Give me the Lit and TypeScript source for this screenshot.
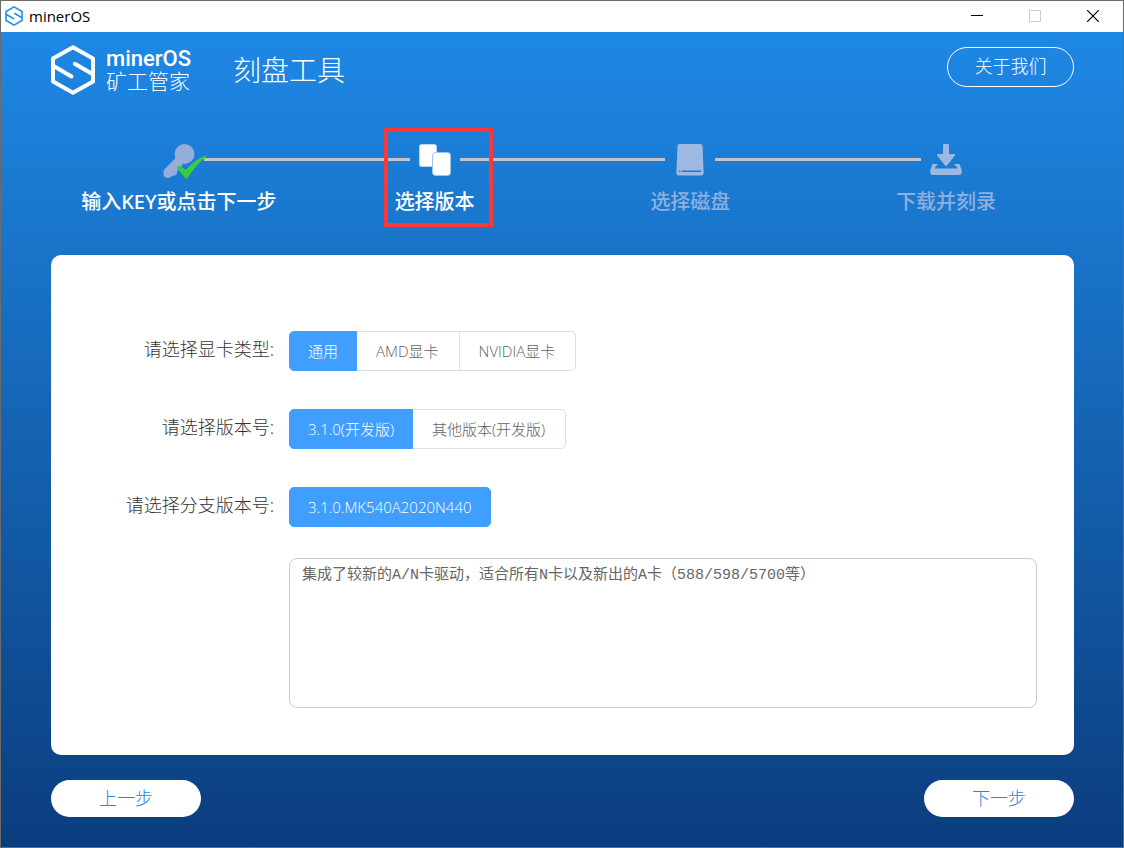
import { LitElement, html, css, svg, nothing } from "lit";
import { customElement, property, state } from "lit/decorators.js";
import { classMap } from "lit/directives/class-map.js";

const hexagonMark = svg`
  <g fill="none" stroke="currentColor" stroke-width="4" stroke-linejoin="round" stroke-linecap="round">
    <path d="M22 2.3 42 13.6v22.8L22 47.7 2 36.4V13.6z" />
    <path d="M3 21.2 20.5 31.4M23.8 18.8 41 28.8" />
  </g>`;

const stepIcons = {
  key: svg`
    <g fill="#96addb">
      <circle cx="30.500" cy="14" r="10" />
      <path d="M22 17.500 9.600 30.200v5l2 2.600h4.600l1.800-2h2.600l2.400-2.300v-2.600l6-6.500z" />
    </g>
    <path fill="#3bcc3b" d="M22.300 27.600 25.600 25.400l6.400 4.600c5-6.200 11.600-11.600 20.400-14.800l.4 1.400C44.600 22.400 38.800 30.400 32.400 39.300z" />`,
  copies: svg`
    <rect x="9.500" y="4.500" width="17" height="22" rx="2" fill="#fff" stroke="#b9d6f2" />
    <rect x="22.500" y="12.500" width="18" height="23" rx="3" fill="#fff" stroke="#9cc4ec" />`,
  disk: svg`
    <path fill="#9db9e2" d="M14.500 4h21c1.200 0 2 .8 2.100 2L38.600 32.500c.1 2-.9 3-2.600 3H14c-1.800 0-2.700-1-2.600-3L12.500 6c.1-1.200.8-2 2-2z" />
    <path fill="#1c76cf" d="M17 30.600h19v1.400H17zM14 30.600h1.500v1.400H14z" />`,
  download: svg`
    <g fill="#9db9e2">
      <path d="M22 5.500c0-1 .6-1.500 1.600-1.500h2.800c1 0 1.600.5 1.600 1.500V14h5.200c1 0 1.200.8.6 1.500l-7.600 9.700c-.8 1-1.600 1-2.400 0l-7.600-9.700c-.6-.7-.4-1.500.6-1.500H22z" />
      <path d="M11.500 24h5v1.500h-1.500l-1.200 3h22.400l-1.200-3h-1.500V24h5l2.200 6v2.500c0 1.500-.8 2.500-2.500 2.500H11.800c-1.700 0-2.500-1-2.500-2.500V30z" />
    </g>`,
};

interface Step {
  label: string;
  icon: keyof typeof stepIcons;
}

const steps: Step[] = [
  { label: "输入KEY或点击下一步", icon: "key" },
  { label: "选择版本", icon: "copies" },
  { label: "选择磁盘", icon: "disk" },
  { label: "下载并刻录", icon: "download" },
];

@customElement("title-bar")
class TitleBar extends LitElement {
  static styles = css`
    :host {
      display: flex;
      align-items: center;
      box-sizing: border-box;
      height: 31px;
      padding: 0 1px 1px 0;
      background: #fff;
      color: #000;
    }
    .icon {
      width: 18px;
      height: 20px;
      margin: 0 6px 0 4px;
      color: #1e90f0;
    }
    .name {
      flex: 1;
      font: 15px/20px "Open Sans", sans-serif;
    }
    .control {
      display: flex;
      align-items: center;
      justify-content: center;
      width: 58px;
      height: 30px;
      padding: 0;
      border: 0;
      background: none;
      color: #000;
    }
    .control:disabled {
      color: #ccc;
    }
  `;

  render() {
    return html`
      <svg class="icon" viewBox="0 0 44 50" aria-hidden="true">${hexagonMark}</svg>
      <span class="name">minerOS</span>
      <button class="control" aria-label="最小化">
        <svg width="12" height="12"><path d="M0 5.500h12" stroke="currentColor" /></svg>
      </button>
      <button class="control" aria-label="最大化" disabled>
        <svg width="12" height="12"><rect x=".5" y=".5" width="11" height="11" fill="none" stroke="currentColor" /></svg>
      </button>
      <button class="control" aria-label="关闭">
        <svg width="12" height="12"><path d="M0 0l12 12M12 0 0 12" stroke="currentColor" stroke-width="1.200" /></svg>
      </button>
    `;
  }
}

@customElement("step-bar")
class StepBar extends LitElement {
  @property({ type: Number }) current = 0;

  static styles = css`
    .steps {
      display: flex;
      margin: 0;
      padding: 0;
      list-style: none;
    }
    .step {
      position: relative;
      flex: 1 1 0;
      min-width: 0;
      color: #8fb0de;
      text-align: center;
    }
    .step.reached {
      color: #fff;
    }
    .track {
      display: flex;
      align-items: center;
      height: 39px;
    }
    .line {
      flex: 1;
      height: 3px;
      background: #c3c3cb;
    }
    .line.hidden {
      visibility: hidden;
    }
    .icon {
      align-self: flex-start;
      width: 50px;
      height: 40px;
      overflow: visible;
      z-index: 1;
    }
    .label {
      margin-top: 8px;
      font-family: "Noto Sans", "Noto Sans CJK SC", sans-serif;
      font-size: 20px;
      line-height: 30px;
      font-weight: 500;
      white-space: nowrap;
    }
    .highlight {
      position: absolute;
      top: -12px;
      left: calc(50% - 51px);
      width: 109px;
      height: 99px;
      box-sizing: border-box;
      border: 4px solid #fb3838;
      z-index: 2;
      pointer-events: none;
    }
  `;

  render() {
    return html`
      <ol class="steps">
        ${steps.map(
          (step, i) => html`
            <li class=${classMap({ step: true, reached: i <= this.current })}>
              <div class="track">
                <span class=${classMap({ line: true, hidden: i === 0 })}></span>
                <svg class="icon" viewBox="0 0 50 40" aria-hidden="true">${stepIcons[step.icon]}</svg>
                <span class=${classMap({ line: true, hidden: i === steps.length - 1 })}></span>
              </div>
              <div class="label">${step.label}</div>
              ${i === this.current ? html`<span class="highlight"></span>` : nothing}
            </li>
          `
        )}
      </ol>
    `;
  }
}

@customElement("option-group")
class OptionGroup extends LitElement {
  @property() name = "";
  @property() label = "";
  @property({ attribute: false }) options: string[] = [];
  @state() selected = 0;

  static styles = css`
    .row {
      display: grid;
      grid-template-columns: 223px 1fr;
      column-gap: 15px;
      margin: 0;
    }
    .caption {
      color: #333;
      font-size: 18px;
      line-height: 36px;
      text-align: right;
    }
    .options {
      display: flex;
    }
    .option {
      position: relative;
      box-sizing: border-box;
      height: 40px;
      padding: 0 20px 0 19px;
      border: 1px solid #dcdfe6;
      border-left-width: 0;
      background: #fff;
      color: #606266;
      font-size: 15px;
      line-height: 39px;
      white-space: nowrap;
    }
    .option:first-child {
      padding: 0 18px;
      border-left-width: 1px;
      border-radius: 5px 0 0 5px;
    }
    .option:last-child {
      border-radius: 0 5px 5px 0;
    }
    .option:only-child {
      border-radius: 5px;
    }
    .option.checked {
      border-color: #409eff;
      background: #409eff;
      color: #fff;
    }
    .radio {
      position: absolute;
      inset: 0;
      width: 100%;
      height: 100%;
      margin: 0;
      opacity: 0;
    }
  `;

  render() {
    return html`
      <div class="row" role="radiogroup" aria-labelledby="caption">
        <span class="caption" id="caption">${this.label}</span>
        <div class="options">
          ${this.options.map(
            (text, i) => html`
              <label class=${classMap({ option: true, checked: i === this.selected })}>
                <input
                  class="radio"
                  type="radio"
                  name=${this.name}
                  .checked=${i === this.selected}
                  @change=${() => (this.selected = i)}
                />${text}
              </label>
            `
          )}
        </div>
      </div>
    `;
  }
}

@customElement("app-root")
class AppRoot extends LitElement {
  static styles = css`
    :host {
      display: flex;
      flex-direction: column;
      box-sizing: border-box;
      min-height: 100vh;
      border: 1px solid #6b6b6b;
      font-family: "Open Sans", "Noto Sans CJK SC", sans-serif;
      font-weight: 300;
    }
    .body {
      flex: 1;
      display: flex;
      flex-direction: column;
      padding: 13px 49px 30px 50px;
      background: linear-gradient(#1e88e5, #0b3d7e);
    }
    .header {
      display: flex;
      align-items: center;
      height: 50px;
      color: #fff;
    }
    .mark {
      width: 44px;
      height: 50px;
      margin-right: 11px;
    }
    .brand {
      display: flex;
      flex-direction: column;
    }
    .brand-latin {
      font: 500 22px/22px Roboto, sans-serif;
    }
    .brand-cjk {
      font-size: 21px;
      line-height: 22px;
    }
    .title {
      flex: 1;
      margin: 0 0 0 42px;
      font-size: 28px;
      line-height: 40px;
      font-weight: 300;
    }
    .about {
      align-self: flex-start;
      width: 127px;
      height: 40px;
      margin-top: 2px;
      padding: 0 0 4px;
      border: 1px solid #fff;
      border-radius: 20px;
      background: none;
      color: #fff;
      font: inherit;
      font-size: 18px;
    }
    .progress {
      margin-top: 45px;
    }
    .card {
      display: flex;
      flex-direction: column;
      gap: 38px;
      flex: 1;
      margin-top: 38px;
      padding: 76px 37px 47px 0;
      border-radius: 10px;
      background: #fff;
    }
    .notes {
      box-sizing: border-box;
      flex: 1;
      min-height: 150px;
      margin: -7px 0 0 238px;
      padding: 6px 12px;
      border: 1px solid #ccc;
      border-radius: 8px;
      background: #fff;
      color: #666;
      font: 400 15px/22px "Liberation Mono", "Noto Sans CJK SC", monospace;
      resize: none;
      outline: none;
    }
    .footer {
      display: flex;
      justify-content: space-between;
      margin-top: 25px;
    }
    .nav {
      width: 150px;
      height: 37px;
      padding: 0 0 4px;
      border: 0;
      border-radius: 19px;
      background: #fff;
      color: #1e88e5;
      font: inherit;
      font-size: 18px;
    }
  `;

  render() {
    return html`
      <title-bar></title-bar>
      <main class="body">
        <header class="header">
          <svg class="mark" viewBox="0 0 44 50" aria-hidden="true">${hexagonMark}</svg>
          <div class="brand">
            <span class="brand-latin">minerOS</span>
            <span class="brand-cjk">矿工管家</span>
          </div>
          <h1 class="title">刻盘工具</h1>
          <button class="about">关于我们</button>
        </header>
        <step-bar class="progress" .current=${1}></step-bar>
        <section class="card">
          <option-group name="gpu" label="请选择显卡类型:" .options=${["通用", "AMD显卡", "NVIDIA显卡"]}></option-group>
          <option-group name="version" label="请选择版本号:" .options=${["3.1.0(开发版)", "其他版本(开发版)"]}></option-group>
          <option-group name="branch" label="请选择分支版本号:" .options=${["3.1.0.MK540A2020N440"]}></option-group>
          <textarea
            class="notes"
            aria-label="版本说明"
            readonly
            spellcheck="false"
            .value=${"集成了较新的A/N卡驱动，适合所有N卡以及新出的A卡（588/598/5700等）"}
          ></textarea>
        </section>
        <footer class="footer">
          <button class="nav">上一步</button>
          <button class="nav">下一步</button>
        </footer>
      </main>
    `;
  }
}
